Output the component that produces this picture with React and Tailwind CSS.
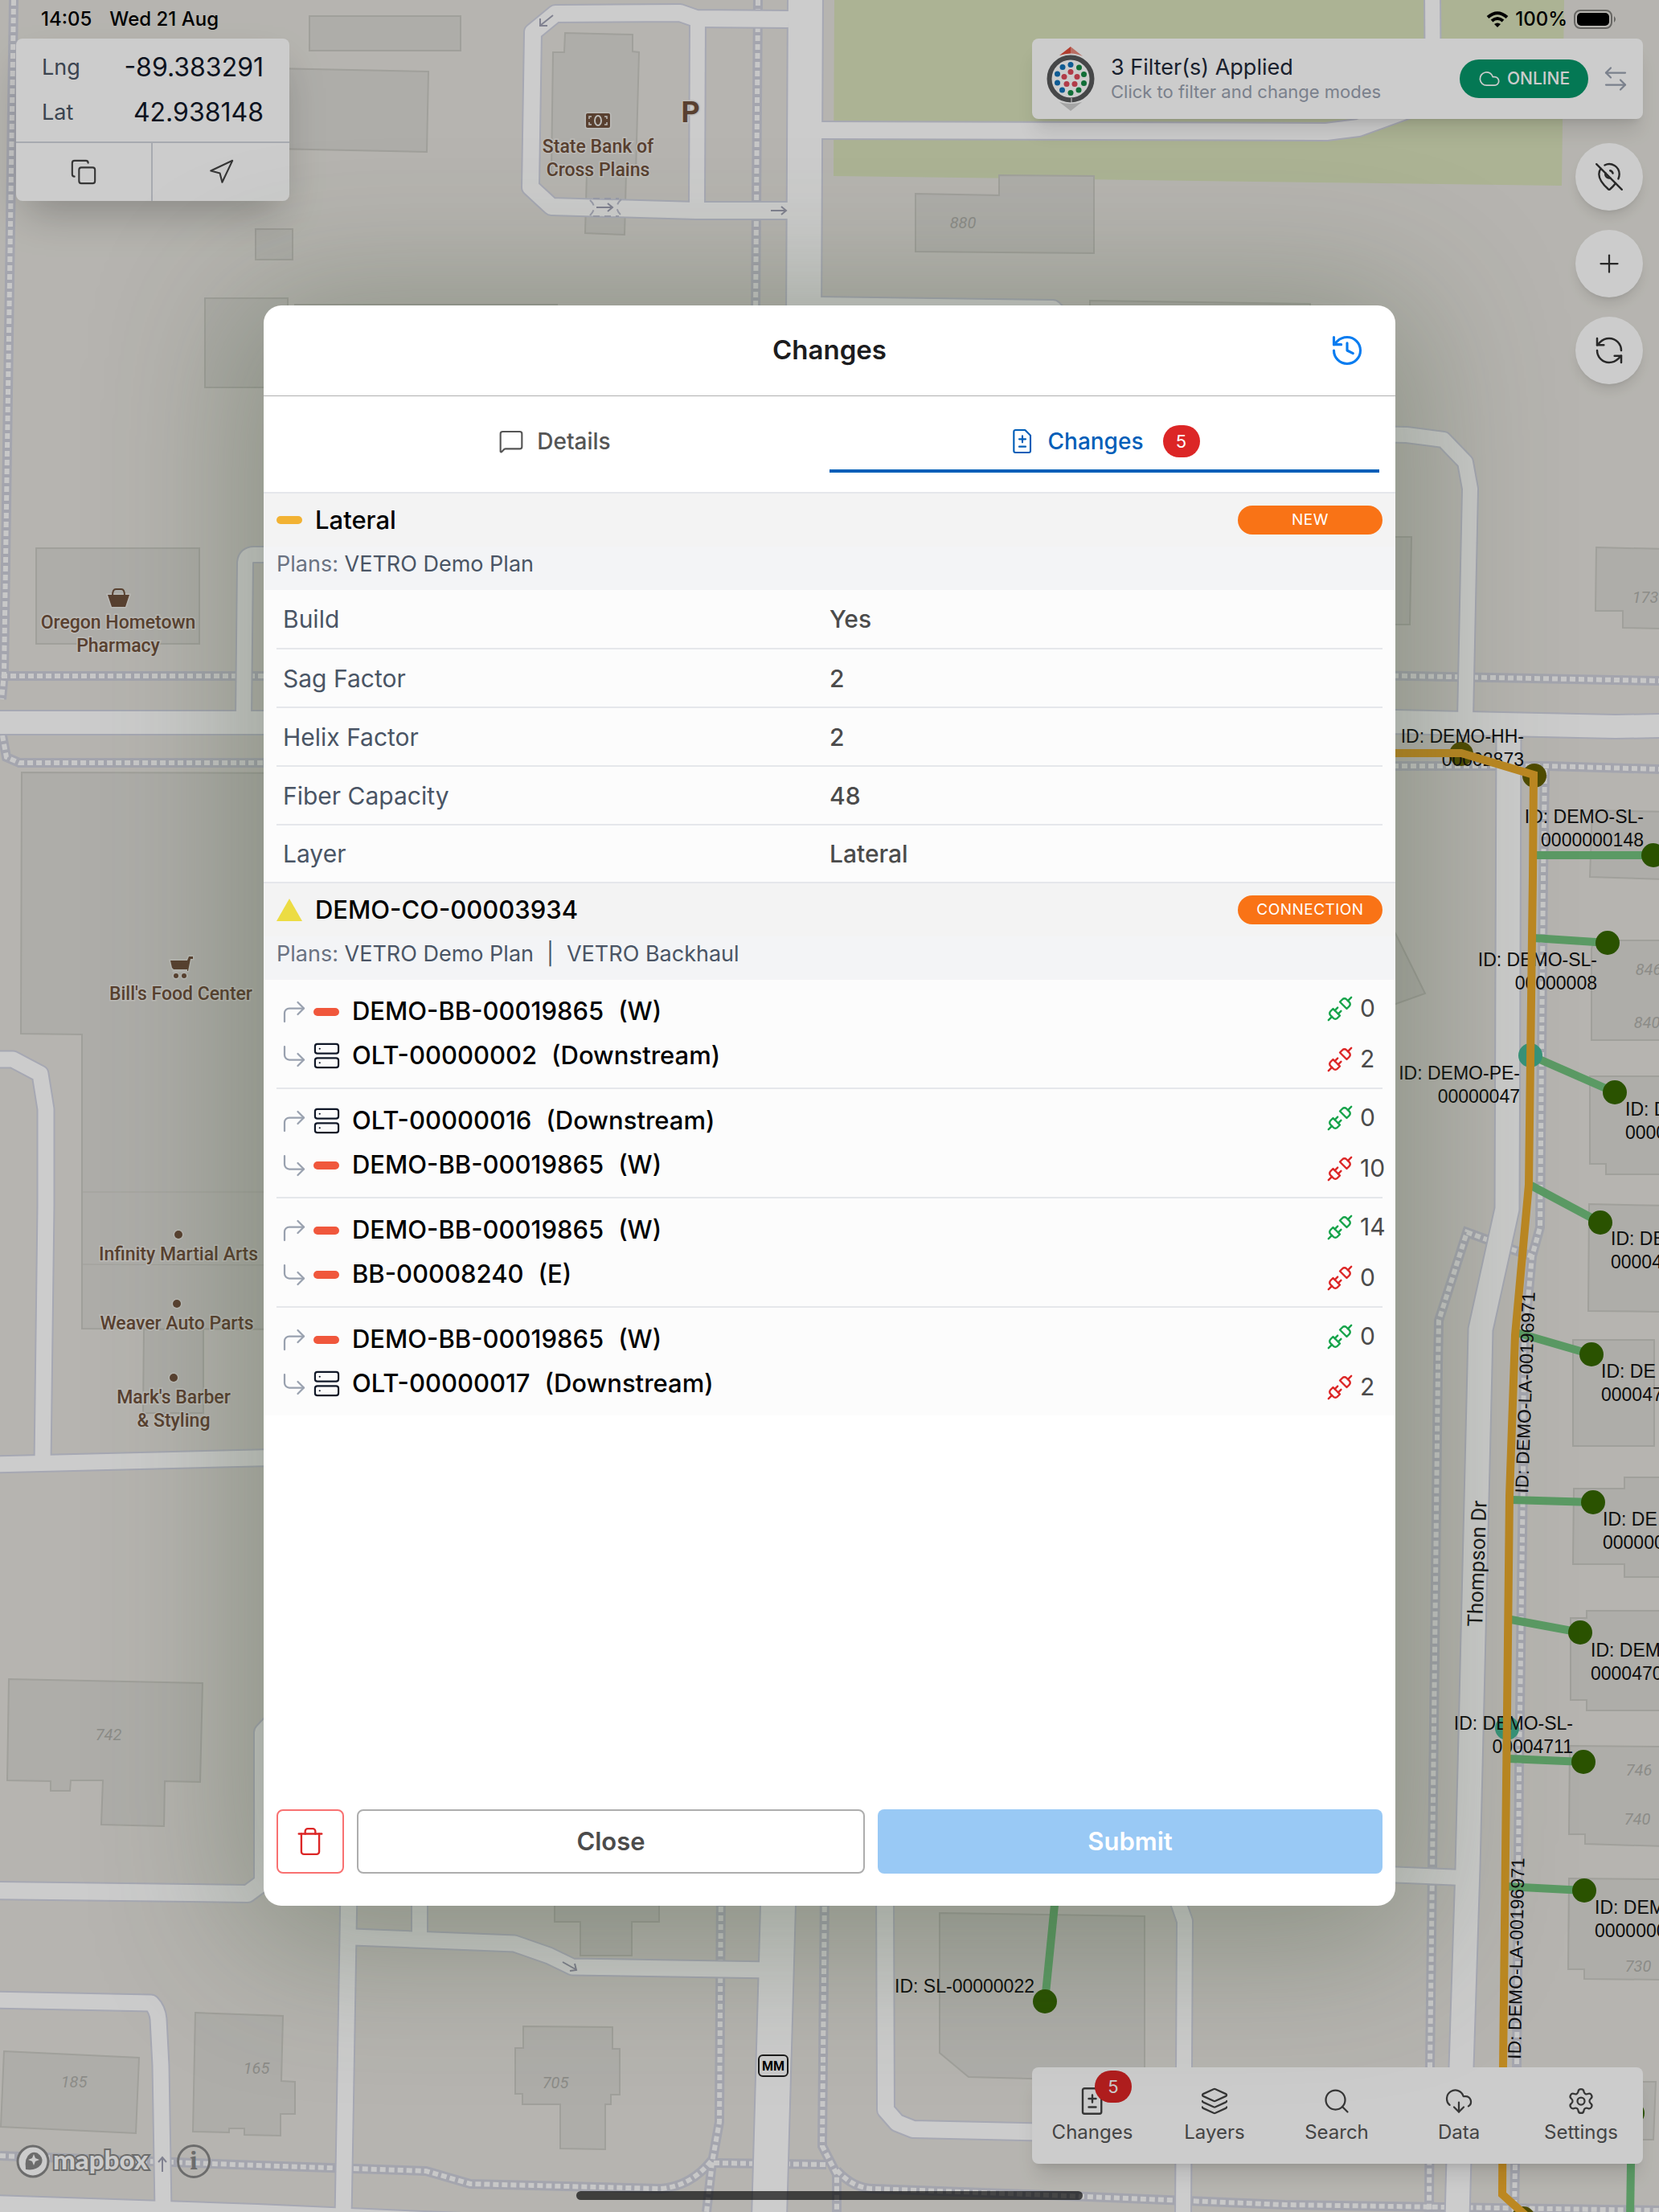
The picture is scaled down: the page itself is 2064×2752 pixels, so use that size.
import { useState } from 'react'
import {
  Cloud, CloudDownload, Copy, CornerDownRight, CornerUpRight, ArrowLeftRight, History, Layers,
  MapPinOff, MessageSquare, Navigation, Plus, RefreshCcw, Search, Server, Settings, Trash, Unplug,
} from 'lucide-react'

const roads = [
  { w: 20, d: 'M981 24L866 23L846 16L691 17L663 40L660 233L686 257L866 262L990 262' },
  { w: 18, d: 'M868 24L867 262' },
  { w: 20, d: 'M1010 162L1650 164L1690 159L1770 130' },
  { w: 18, d: 'M1782 -10L1783 140' },
  { w: 20, d: 'M1010 380L1310 384L1326 400' },
  { w: 18, d: 'M1700 540L1750 541L1796 547L1823 575L1829 608L1823 895' },
  { w: 28, d: 'M-10 899L1000 899L1736 898L2010 904L2070 903' },
  { w: 18, d: 'M303 895L305 700Q306 690 316 690L400 690' },
  { w: 29, d: 'M1877 905L1875 1504L1842 1654L1841 1700L1826 2324L1818 2572L1813 2760' },
  { w: 19, d: 'M-10 1318L16 1318L50 1336L57 1380L57 1500L53 1820' },
  { w: 19, d: 'M-10 1822L400 1812' },
  { w: 20, d: 'M-10 2352L308 2356L327 2342L327 2155L360 2120' },
  { w: 19, d: 'M-10 2488L188 2492Q196 2500 197 2512L200 2570L203 2750' },
  { w: 28, d: 'M-10 2746L320 2757L620 2770' },
  { w: 19, d: 'M434 2350L427 2760' },
  { w: 18, d: 'M522 2350L522 2410' },
  { w: 19, d: 'M440 2410L640 2418L683 2433L712 2447L960 2451' },
  { w: 20, d: 'M1101 2350L1102 2625L1116 2641L1136 2649L1320 2653' },
  { w: 18, d: 'M1460 2350L1474 2390L1472 2760' },
  { w: 18, d: 'M1700 2331L1820 2336' },
  { w: 42, d: 'M1002 -10L1000 400L968 2371L957 2760' },
]

const paths = [
  'M17 0L5 838L2 870',
  'M2 841L340 841',
  'M3 915L8 942L24 949L340 949',
  'M943 0L940 390',
  'M1700 840L2064 847',
  'M1700 953L1925 953L2064 957',
  'M1922 957L1920 1090L1916 1527L1906 1563L1896 1670L1895 1834L1890 2203L1887 2572L1884 2752',
  'M1852 1543L1825 1533L1790 1643L1789 1700L1782 2324L1779 2572L1778 2752',
  'M1880 1554L1906 1563',
  'M0 2682L320 2694L530 2701L585 2717L822 2723Q860 2720 886 2687',
  'M897 2350L895 2640L886 2690L879 2752',
  'M1026 2350L1023 2670L1041 2705L1041 2752',
  'M888 2691L1028 2693',
  'M1041 2700Q1062 2723 1087 2723L1279 2730L1599 2743L2064 2750',
]

const buildings = [
  '385,20 573,20 573,63 385,63',
  '340,85 533,89 531,189 340,185',
  '318,285 364,285 364,323 318,323',
  '255,371 358,371 358,482 255,482',
  '367,379 693,379 693,420 367,420',
  '703,41 787,43 787,64 795,65 791,215 779,215 777,292 728,290 730,215 686,215 688,65 702,65',
  '1139,241 1243,243 1243,218 1361,219 1361,315 1139,313',
  '1356,374 1630,378 1630,420 1356,420',
  '1700,668 1756,668 1754,777 1700,777',
  '1986,681 2070,683 2070,782 2019,781 2019,760 1985,760',
  '45,682 248,682 248,801 45,801',
  '27,961 400,962 400,1654 102,1653 102,1287 26,1286',
  '179,1654 253,1654 253,1758 178,1758',
  '11,2089 252,2094 249,2217 205,2216 204,2272 126,2270 128,2215 88,2215 87,2228 63,2228 63,2216 9,2215',
  '5,2552 173,2560 169,2654 1,2646',
  '243,2504 352,2508 350,2589 367,2590 367,2630 349,2630 349,2657 304,2656 304,2648 285,2648 285,2653 240,2652',
  '690,2360 820,2360 820,2391 786,2391 786,2433 722,2433 722,2391 690,2391',
  '651,2521 762,2522 762,2549 771,2549 771,2606 760,2606 760,2618 753,2618 753,2674 697,2673 697,2618 650,2618 650,2605 641,2605 641,2548 651,2548',
  '1169,2380 1424,2384 1424,2590 1205,2584 1169,2554',
  '1700,1110 1736,1161 1773,1236 1700,1262',
  '1981,1008 2070,1010 2070,1094 1978,1091',
  '1982,1170 2070,1170 2070,1294 1980,1294 1980,1181',
  '1978,1339 2070,1339 2070,1461 1998,1461 1998,1448 1978,1448',
  '1977,1498 2070,1500 2070,1632 1976,1631',
  '1957,1667 2058,1667 2058,1799 1957,1799',
  '1958,1852 2021,1852 2021,1838 2070,1838 2070,1962 2021,1962 2021,1946 1957,1946',
  '1954,2013 1974,2013 1974,2004 2070,2004 2070,2128 1974,2128 1974,2115 1954,2115',
  '1953,2172 2070,2173 2070,2297 1972,2294 1972,2282 1952,2282',
  '1952,2337 2070,2338 2070,2463 1971,2462 1971,2450 1951,2450',
  '2020,2590 2060,2590 2057,2662 2020,2662',
]

const houseNumbers = [
  ['880', 1198, 284], ['173', 2047, 750], ['742', 135, 2165], ['185', 92, 2597], ['165', 319, 2580],
  ['705', 691, 2598], ['846', 2051, 1213], ['840', 2049, 1279], ['746', 2039, 2209], ['740', 2037, 2270], ['730', 2038, 2453],
]

const drops = [
  ['M1908 1064L2057 1064', 2057, 1064], ['M1908 1167L2000 1173', 2000, 1173], ['M1904 1313L2009 1359', 2009, 1359],
  ['M1905 1475L1991 1521', 1991, 1521], ['M1887 1658L1980 1685', 1980, 1685], ['M1880 1866L1982 1869', 1982, 1869],
  ['M1880 2015L1966 2031', 1966, 2031], ['M1876 2188L1970 2192', 1970, 2192], ['M1874 2347L1971 2352', 1971, 2352],
  ['M1314 2350L1300 2490', 1300, 2490], ['M2030 2629L2028 2760', 2031, 2629],
]

const assetLabels = [
  { x: 1896, y: 924, end: true, lines: ['ID: DEMO-HH-', '00002873'] },
  { x: 2045, y: 1024, end: true, lines: ['ID: DEMO-SL-', '0000000148'] },
  { x: 1987, y: 1202, end: true, lines: ['ID: DEMO-SL-', '00000008'] },
  { x: 1891, y: 1343, end: true, lines: ['ID: DEMO-PE-', '00000047'] },
  { x: 1957, y: 2152, end: true, lines: ['ID: DEMO-SL-', '00004711'] },
  { x: 1287, y: 2479, end: true, lines: ['ID: SL-00000022'] },
  { x: 2022, y: 1388, lines: ['ID: D', '0000'] },
  { x: 2004, y: 1549, lines: ['ID: DE', '00004'] },
  { x: 1992, y: 1714, lines: ['ID: DE', '000047'] },
  { x: 1994, y: 1898, lines: ['ID: DE', '000000'] },
  { x: 1979, y: 2061, lines: ['ID: DEM', '0000470'] },
  { x: 1984, y: 2381, lines: ['ID: DEM', '0000000'] },
]

const places = [
  { x: 744, y: 190, lines: ['State Bank of', 'Cross Plains'] },
  { x: 147, y: 782, lines: ['Oregon Hometown', 'Pharmacy'] },
  { x: 225, y: 1244, lines: ["Bill's Food Center"] },
  { x: 222, y: 1568, dot: true, lines: ['Infinity Martial Arts'] },
  { x: 220, y: 1654, dot: true, lines: ['Weaver Auto Parts'] },
  { x: 216, y: 1746, dot: true, lines: ["Mark's Barber", '& Styling'] },
]

const attributes = [['Build', 'Yes'], ['Sag Factor', '2'], ['Helix Factor', '2'], ['Fiber Capacity', '48'], ['Layer', 'Lateral']]

const connections = [
  { from: ['cable', 'DEMO-BB-00019865', '(W)'], to: ['olt', 'OLT-00000002', '(Downstream)'], added: 0, removed: 2 },
  { from: ['olt', 'OLT-00000016', '(Downstream)'], to: ['cable', 'DEMO-BB-00019865', '(W)'], added: 0, removed: 10 },
  { from: ['cable', 'DEMO-BB-00019865', '(W)'], to: ['cable', 'BB-00008240', '(E)'], added: 14, removed: 0 },
  { from: ['cable', 'DEMO-BB-00019865', '(W)'], to: ['olt', 'OLT-00000017', '(Downstream)'], added: 0, removed: 2 },
]

function ChangesIcon({ className }) {
  return (
    <svg viewBox="0 0 24 24" fill="none" stroke="currentColor" strokeWidth="1.6" strokeLinecap="round" strokeLinejoin="round" className={className}>
      <path d="M5.5 1.5h9l5 5v14.5a1.5 1.5 0 0 1-1.5 1.5H5.5a1.5 1.5 0 0 1-1.5-1.5V3a1.5 1.5 0 0 1 1.5-1.5z"/>
      <path d="M12 7v6M9 10h6M9 17h6"/>
    </svg>
  )
}

function BrandLogo() {
  const dots = [
    ['#1272b8', 0, -17.5], ['#1272b8', -10, -14.5], ['#1272b8', -16.5, -6], ['#1272b8', -16.5, 5], ['#1272b8', -10.5, 14],
    ['#168a45', 10.5, -14], ['#168a45', 16.5, -5.5], ['#168a45', 16.5, 5.5], ['#168a45', 10, 14], ['#168a45', 0, 17.5],
    ['#de4a5a', 0, -8.5], ['#de4a5a', -8, -2.5], ['#de4a5a', 8, -2.5], ['#de4a5a', -5, 6.5], ['#de4a5a', 5, 6.5],
  ]
  return (
    <svg viewBox="-32 -42 64 84" className="w-16 h-[84px] shrink-0">
      <path d="M0-40L-14-29Q-7-31.5 0-31.5z" fill="#de4c3a"/>
      <path d="M0-40L15-28Q8-31.5 0-31.5z" fill="#e98a7c"/>
      <path d="M0 40L-14 29Q0 33 14 29z" fill="#cfcfcf"/>
      <circle r="26.5" fill="#fff" stroke="#58595b" strokeWidth="6"/>
      <path d="M1 24v6" stroke="#fff" strokeWidth="1"/>
      {dots.map(([c,x,y])=><circle key={`${x}${y}`} cx={x} cy={y} r="3.5" fill={c}/>)}
    </svg>
  )
}

function MapCanvas() {
  return (
    <svg viewBox="0 0 2064 2752" preserveAspectRatio="xMidYMid slice" className="absolute inset-0 w-full h-full bg-[#e4e2dc]">
      <polygon points="1038,0 1946,0 1943,231 1037,219" fill="#d7e0b9"/>
      {buildings.map(p=><polygon key={p} points={p} fill="#dad9d4" stroke="#c9c8c2" strokeWidth="2"/>)}
      <path d="M102 1483L340 1483M102 1573L340 1574" stroke="#c9c8c2" strokeWidth="1"/>

      <g fill="none">
        {paths.map(d=><path key={d} d={d} stroke="#cdcfda" strokeWidth="12"/>)}
        {paths.map(d=><path key={d} d={d} stroke="#fbfbfb" strokeWidth="6" strokeDasharray="7 4"/>)}
        {roads.map(r=><path key={r.d} d={r.d} stroke="#d0d2e0" strokeWidth={r.w+4} strokeLinejoin="round"/>)}
        {roads.map(r=><path key={r.d} d={r.d} stroke="#ffffff" strokeWidth={r.w} strokeLinejoin="round"/>)}
        <g stroke="#a0a2b4" strokeWidth="2">
          <path d="M688 19L673 31M672 23V32H681"/>
          <path d="M742 258H762M756 253L762 258L756 263M959 262H978M972 257L978 262L972 267"/>
          <path d="M700 2441L716 2450M715 2443L717 2451L709 2452"/>
          <path d="M202 2702V2684M197 2690L202 2684L207 2690"/>
        </g>
        <path d="M734 249Q744 258 734 268M773 248Q762 258 773 268M738 247H770M738 269H770" stroke="#c0c2d2" strokeWidth="2" strokeDasharray="8 6"/>
      </g>

      <g fontFamily="Roboto, sans-serif" fontSize="20" fontStyle="italic" fill="#b0b0ab" textAnchor="middle">
        {houseNumbers.map(([n,x,y])=><text key={n} x={x} y={y}>{n}</text>)}
      </g>

      {/* Points of interest */}
      <g fontFamily="Roboto, sans-serif" fontWeight="500" fontSize="23" fill="#70513c" stroke="#eceae6" strokeWidth="3" paintOrder="stroke" textAnchor="middle">
        {places.map(p=>(
          <g key={p.lines[0]}>
            {p.dot&&<circle cx={p.x} cy={p.y-32} r="5"/>}
            {p.lines.map((l,i)=><text key={l} x={p.x} y={p.y+i*29}>{l}</text>)}
          </g>
        ))}
        <text x="859" y="152" fontSize="36" fontWeight="700">P</text>
        <path d="M134 740h27l-5 15h-17z"/>
        <path d="M212 1195h21l2-5h5v3h-3l-3 15h-18v-2l-2-2z"/>
        <circle cx="219" cy="1214" r="3"/>
        <circle cx="229" cy="1214" r="3"/>
        <rect x="729" y="141" width="30" height="18" rx="2"/>
      </g>
      <path d="M140 741q0-8 4-8h7q4 0 4 8" fill="none" stroke="#70513c" strokeWidth="2"/>
      <path d="M215 1207h18" stroke="#eceae6" strokeWidth="2"/>
      <ellipse cx="744" cy="150" rx="4" ry="6" fill="none" stroke="#eceae6" strokeWidth="2"/>
      <path d="M733 148v-3h3M752 145h3v3M733 152v3h3M755 152v3h-3" fill="none" stroke="#eceae6" strokeWidth="1.5"/>
      <rect x="944" y="2557" width="36" height="26" rx="5" fill="#fff" stroke="#222" strokeWidth="2"/>
      <text x="962" y="2576" fontFamily="Roboto, sans-serif" fontWeight="700" fontSize="16" textAnchor="middle">MM</text>
      <text transform="translate(1844 2024) rotate(-88)" fontFamily="Roboto, sans-serif" fontSize="26" fill="#222">Thompson Dr</text>

      {/* Network features */}
      {drops.map(([d])=><path key={d} d={d} stroke="#72c17e" strokeWidth="10"/>)}
      {drops.map(([d,x,y])=><circle key={d} cx={x} cy={y} r="15" fill="#356700"/>)}
      <circle cx="1904" cy="1313" r="15" fill="#46b898"/>
      <circle cx="1875" cy="2150" r="15" fill="#46b898"/>
      <circle cx="1818" cy="938" r="15" fill="#635e00"/>
      <circle cx="1909" cy="965" r="15" fill="#635e00"/>
      <circle cx="1895" cy="2760" r="15" fill="#635e00"/>
      <g fontFamily="'Liberation Sans', Arial, sans-serif" fontSize="23" fill="#111">
        {assetLabels.map(a=>a.lines.map((l,i)=>(
          <text key={`${a.y}-${i}`} x={a.x} y={a.y+i*29} textAnchor={a.end?'end':'start'}>{l}</text>
        )))}
      </g>
      <path d="M1700 937L1818 937L1908 964L1907 1090L1902 1474L1885 1661L1878 1861L1875 2129L1870 2572L1869 2730L1900 2758" fill="none" stroke="#ecaa2b" strokeWidth="10"/>
      <g fontFamily="'Liberation Sans', Arial, sans-serif" fontSize="23" fill="#111">
        <text transform="translate(1901 1858) rotate(-88)">ID: DEMO-LA-00196971</text>
        <text transform="translate(1892 2562) rotate(-89)">ID: DEMO-LA-00196971</text>
      </g>
    </svg>
  )
}

function StatusBar() {
  return (
    <header className="h-12 pl-[51px] pr-[52px] flex items-center justify-between text-black text-[24px] leading-6 font-medium">
      <div className="flex gap-[22px]"><span>14:05</span><span>Wed 21 Aug</span></div>
      <div className="flex items-center gap-2">
        <svg viewBox="0 0 28 20" className="w-7 h-5" fill="none" stroke="currentColor" strokeWidth="4">
          <path d="M2 7.5Q14-3 26 7.5M7 12Q14 6 21 12"/>
          <path d="M14 20l-4-4q4-3 8 0z" fill="currentColor" stroke="none"/>
        </svg>
        <span>100%</span>
        <svg viewBox="0 0 54 24" className="w-[54px] h-6">
          <rect x="1" y="1" width="46" height="22" rx="7" fill="none" stroke="#00000070" strokeWidth="2"/>
          <rect x="4" y="4" width="40" height="16" rx="5"/>
          <path d="M50 8q4 4 0 8z" fill="#00000070"/>
        </svg>
      </div>
    </header>
  )
}

function CoordinatePanel() {
  return (
    <section className="w-[340px] h-[202px] bg-white rounded-lg shadow-2xl flex flex-col">
      <dl className="h-[130px] px-8 pt-2 border-b-2 border-gray-300">
        <div className="h-14 flex items-center justify-between">
          <dt className="text-[27px] text-gray-600">Lng</dt><dd className="text-[32px] text-gray-900">-89.383291</dd>
        </div>
        <div className="h-14 flex items-center justify-between">
          <dt className="text-[27px] text-gray-600">Lat</dt><dd className="text-[32px] text-gray-900">42.938148</dd>
        </div>
      </dl>
      <div className="flex-1 grid grid-cols-2 divide-x-2 divide-gray-300 text-[#444]">
        <button aria-label="Copy coordinates" className="grid place-items-center"><Copy size={34} strokeWidth={1.5}/></button>
        <button aria-label="Go to location" className="grid place-items-center"><Navigation size={34} strokeWidth={1.5}/></button>
      </div>
    </section>
  )
}

function FilterPanel() {
  return (
    <section className="w-[760px] h-[100px] bg-white rounded-lg shadow-xl flex items-center px-4">
      <BrandLogo/>
      <button className="ml-[18px] flex-1 text-left">
        <span className="block text-[27px] leading-8 text-gray-800">3 Filter(s) Applied</span>
        <span className="block text-[22px] leading-7 text-gray-400">Click to filter and change modes</span>
      </button>
      <button className="w-40 h-12 rounded-full bg-[#059669] text-white flex items-center justify-center gap-2 text-[21px] font-medium">
        <Cloud size={28} strokeWidth={1.5}/>ONLINE
      </button>
      <button aria-label="Switch mode" className="ml-4 text-gray-400"><ArrowLeftRight size={36} strokeWidth={1.5}/></button>
    </section>
  )
}

function RoundButton({ label, children }) {
  return (
    <button aria-label={label} className="size-[84px] rounded-full bg-white text-[#333] shadow-lg grid place-items-center">{children}</button>
  )
}

function NavBar() {
  const items = [['Changes',ChangesIcon],['Layers',Layers],['Search',Search],['Data',CloudDownload],['Settings',Settings]]
  return (
    <nav className="w-[760px] h-[120px] bg-white rounded-lg shadow-xl grid grid-cols-5">
      {items.map(([label,Icon])=>(
        <button key={label} className="relative pt-6 pr-[2px] flex flex-col items-center text-[#444]">
          <Icon className="size-9" strokeWidth={1.5}/>
          <span className="mt-[5px] text-[24px] leading-8 text-[#555]">{label}</span>
          {label==='Changes'&&<span className="absolute left-[78px] top-1 w-[46px] h-10 rounded-full bg-[#dc2626] text-white text-[22px] leading-10 text-center">5</span>}
        </button>
      ))}
    </nav>
  )
}

function MapAttribution() {
  return (
    <div className="flex items-center gap-6 h-[46px]">
      <svg viewBox="0 0 176 46" className="w-44 h-[46px]">
        <circle cx="21" cy="23" r="19" fill="#fff" stroke="#888" strokeWidth="3"/>
        <path d="M12 33q-2-15 6-20a10 10 0 0 1 13 14q-6 8-19 6z" fill="#888"/>
        <path d="M22 14l2 5 5 2-5 2-2 5-2-5-5-2 5-2z" fill="#fff"/>
        <text x="46" y="33" fontFamily="Lato, sans-serif" fontWeight="900" fontSize="33" fill="#fff" stroke="#888" strokeWidth="4" paintOrder="stroke">mapbox</text>
      </svg>
      <button aria-label="Map info" className="size-[42px] rounded-full border-3 border-[#888] text-[#888] font-serif text-[32px] leading-8 font-bold">i</button>
    </div>
  )
}

function Cable({ className }) {
  return <span className={`w-8 h-[10px] rounded-full ${className}`}/>
}

function SectionHeader({ symbol, title, tag, plans }) {
  return (
    <div className="border-t-2 border-gray-200">
      <div className="h-[66px] px-4 bg-[#f3f3f3] flex items-center gap-4">
        {symbol}
        <h2 className="flex-1 text-[31px] font-medium text-black">{title}</h2>
        <span className="w-[180px] h-9 rounded-full bg-[#f97316] text-white text-[19px] leading-9 text-center tracking-wide">{tag}</span>
      </div>
      <p className="h-[54px] px-4 pt-1 bg-gray-100 text-[27px] leading-9 text-gray-500">
        Plans: <span className="text-gray-600">{plans.map((p,i)=><span key={p}>{i>0&&<span className="mx-4">|</span>}{p}</span>)}</span>
      </p>
    </div>
  )
}

function Endpoint({ data:[kind,name,port], arrow:Arrow }) {
  return (
    <div className="h-[55px] flex items-center">
      <Arrow size={36} strokeWidth={1.5} className="text-gray-400 mr-[6px]"/>
      <span className="w-8 mr-4 flex justify-center">
        {kind==='cable'?<Cable className="bg-[#f0573c]"/>:<Server size={35} strokeWidth={1.5} className="shrink-0 text-gray-900"/>}
      </span>
      <span className="text-[31px] font-medium text-black">{name}</span>
      <span className="ml-[18px] text-[31px] font-medium text-black">{port}</span>
    </div>
  )
}

function Count({ value, className }) {
  return (
    <div className="h-[63px] flex items-center gap-2 text-[30px] text-[#4b4b4b]">
      <Unplug size={34} strokeWidth={1.7} className={`shrink-0 ${className}`}/>{value}
    </div>
  )
}

function ChangesDialog() {
  const [tab,setTab] = useState('changes')
  return (
    <div role="dialog" aria-label="Changes" className="w-full max-w-[1408px] bg-white rounded-[22px] overflow-hidden shadow-[0_20px_180px_30px_rgba(55,75,45,0.34)] flex flex-col">
      <div className="h-[113px] border-b border-[#b0b0b0] grid grid-cols-[1fr_auto_1fr] items-center px-[38px]">
        <h1 className="col-start-2 text-[33px] font-semibold text-[#1c1c1e]">Changes</h1>
        <button aria-label="History" className="justify-self-end text-[#087cf0]"><History size={44} strokeWidth={1.7}/></button>
      </div>

      <div role="tablist" className="px-5 h-[119px] grid grid-cols-2 text-[28px] font-medium">
        <button role="tab" aria-selected={tab==='details'} onClick={()=>setTab('details')} className={`h-[95px] pt-6 pb-1 flex items-center justify-center gap-4 border-b-4 ${tab==='details'?'text-[#005eb8] border-[#005eb8]':'text-[#555] border-transparent'}`}>
          <MessageSquare size={32} strokeWidth={1.6}/>Details
        </button>
        <button role="tab" aria-selected={tab==='changes'} onClick={()=>setTab('changes')} className={`h-[95px] pt-6 pb-1 flex items-center justify-center gap-4 border-b-4 ${tab==='changes'?'text-[#005eb8] border-[#005eb8]':'text-[#555] border-transparent'}`}>
          <ChangesIcon className="size-8"/>Changes
          <span className="ml-2 w-[46px] h-10 rounded-full bg-[#dc2626] text-white text-[22px] leading-10 font-normal">5</span>
        </button>
      </div>

      <div className="flex-1">
        <SectionHeader symbol={<Cable className="bg-[#f2b233]"/>} title="Lateral" tag="NEW" plans={['VETRO Demo Plan']}/>
        <div className="px-4 bg-[#fcfcfc]">
          <table className="w-full text-[30px] leading-9 text-left">
            <tbody>
              {attributes.map(([k,v])=>(
                <tr key={k} className="h-[73px] border-b-2 border-gray-200 last:h-[71px] last:border-b-0">
                  <th scope="row" className="w-1/2 pl-2 font-normal text-gray-600">{k}</th>
                  <td className="w-1/2 font-medium text-[#4b4b4b]">{v}</td>
                </tr>
              ))}
            </tbody>
          </table>
        </div>

        <SectionHeader
          symbol={<svg viewBox="0 0 32 28" className="w-8 h-7"><path d="M16 0L32 28H0z" fill="#ecdc43"/></svg>}
          title="DEMO-CO-00003934" tag="CONNECTION" plans={['VETRO Demo Plan','VETRO Backhaul']}
        />
        <ul className="px-4 bg-[#fcfcfc] divide-y-2 divide-gray-200">
          {connections.map((c,i)=>(
            <li key={i} className="flex justify-between">
              <div className="py-3 pl-1">
                <Endpoint data={c.from} arrow={CornerUpRight}/>
                <Endpoint data={c.to} arrow={CornerDownRight}/>
              </div>
              <div className="py-1 w-[70px]">
                <Count value={c.added} className="text-[#16a34a]"/>
                <Count value={c.removed} className="text-[#dc2626]"/>
              </div>
            </li>
          ))}
        </ul>
      </div>

      <div className="px-4 pb-10 flex gap-4 text-[31px] font-semibold">
        <button aria-label="Delete" className="w-[84px] h-20 rounded-lg border-2 border-[#f87171] text-[#dc2626] grid place-items-center"><Trash size={38} strokeWidth={1.5}/></button>
        <button className="flex-1 h-20 rounded-lg border-2 border-[#adadad] text-[#4b4b4b]">Close</button>
        <button className="flex-1 h-20 rounded-lg bg-[#99c9f5] text-white">Submit</button>
      </div>
    </div>
  )
}

export default function App() {
  return (
    <div className="relative min-h-screen w-full overflow-hidden font-['Inter',sans-serif]">
      <MapCanvas/>

      <div className="relative min-h-screen flex flex-col">
        <StatusBar/>
        <div className="px-5 flex items-start justify-between">
          <CoordinatePanel/>
          <div className="flex flex-col items-end">
            <FilterPanel/>
            <div className="mt-[30px] flex flex-col gap-6">
              <RoundButton label="Hide pins"><MapPinOff size={38} strokeWidth={1.5}/></RoundButton>
              <RoundButton label="Add feature"><Plus size={36} strokeWidth={1.5}/></RoundButton>
              <RoundButton label="Refresh"><RefreshCcw size={40} strokeWidth={1.5}/></RoundButton>
            </div>
          </div>
        </div>
        <div className="mt-auto px-5 pb-[60px] flex items-end justify-between">
          <div className="-mb-5"><MapAttribution/></div>
          <NavBar/>
        </div>
      </div>

      {/* Backdrop and dialog */}
      <div className="absolute inset-0 bg-black/20 flex justify-center pt-[380px] pb-[381px]">
        <ChangesDialog/>
      </div>
      <div className="absolute bottom-[15px] left-1/2 -translate-x-1/2 w-[630px] h-[11px] rounded-full bg-black/65"/>
    </div>
  )
}
